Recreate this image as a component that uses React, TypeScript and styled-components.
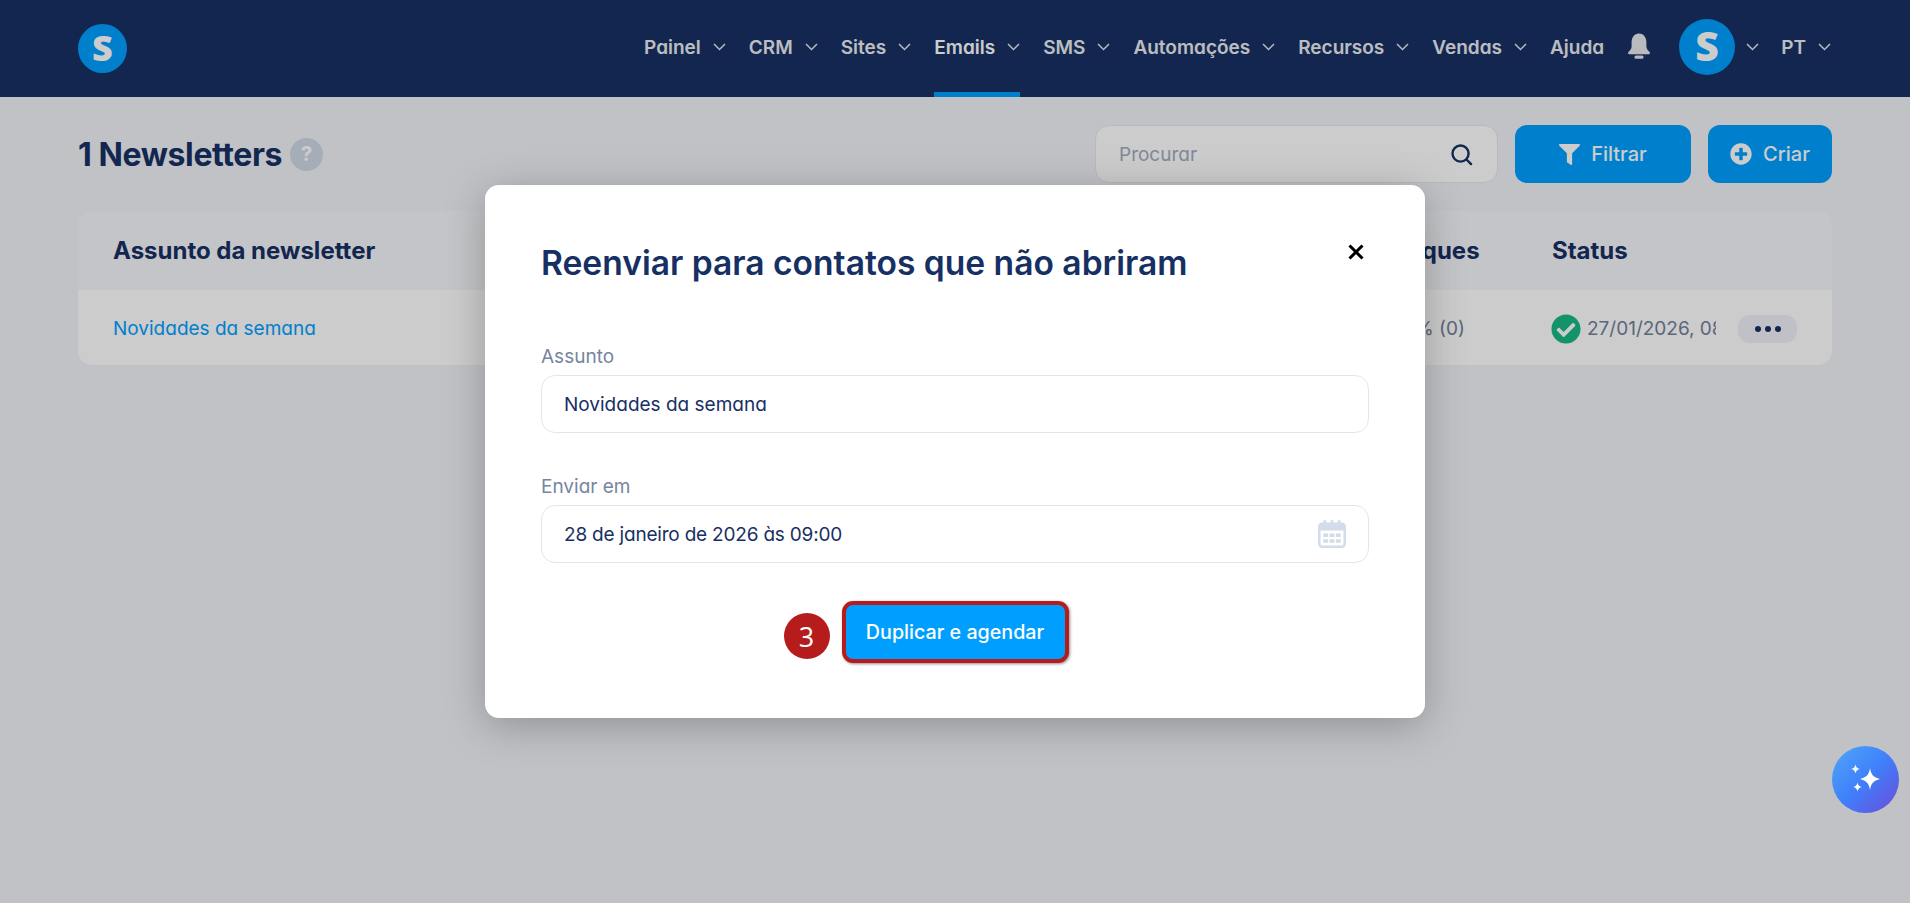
import React from 'react';
import styled, { createGlobalStyle } from 'styled-components';
import { FaCheckCircle, FaFilter, FaPlusCircle } from 'react-icons/fa';

const GlobalStyle = createGlobalStyle`
  html, body {
    margin: 0;
    height: 100%;
    overflow: hidden;
    background: #f1f3f8;
  }
  * {
    box-sizing: border-box;
  }
`;

const geometric = `'Inter', 'Liberation Sans', sans-serif`;

const Page = styled.div`
  position: relative;
  height: 100vh;
  font-family: ${geometric};
  font-feature-settings: 'cv11' 1;
  color: #173063;
`;

const Header = styled.header`
  height: 97px;
  padding: 0 79px 0 78px;
  background: #173063;
  display: flex;
  align-items: center;
  justify-content: space-between;
`;

const LogoCircle = styled.div<{ $size: number; $font: number }>`
  width: ${(p) => p.$size}px;
  height: ${(p) => p.$size}px;
  border-radius: 50%;
  background: #00a0ff;
  color: #fff;
  display: flex;
  align-items: center;
  justify-content: center;
  font-family: 'Open Sans', sans-serif;
  font-weight: 800;
  font-size: ${(p) => p.$font}px;
  line-height: 1;
  font-feature-settings: normal;

  span {
    transform: translateY(-2%);
  }
`;

const Nav = styled.nav`
  height: 100%;
  display: flex;
  align-items: center;
  gap: 23px;
`;

const NavItem = styled.a<{ $active?: boolean }>`
  position: relative;
  height: 100%;
  padding-bottom: 3px;
  display: flex;
  align-items: center;
  gap: 12px;
  font-size: 19px;
  font-weight: 600;
  color: ${(p) => (p.$active ? '#ffffff' : '#eaedf2')};

  &::after {
    content: '';
    display: ${(p) => (p.$active ? 'block' : 'none')};
    position: absolute;
    left: 0;
    right: 0;
    bottom: 0;
    height: 5px;
    background: #00a0ff;
  }
`;

const AvatarGroup = styled.div`
  margin-left: 5px;
  margin-right: -1px;
  display: flex;
  align-items: center;
  gap: 11px;
  padding-bottom: 4px;
`;

const Main = styled.main`
  padding: 28px 78px 0;
`;

const TopBar = styled.div`
  height: 58px;
  display: flex;
  align-items: center;
`;

const PageTitle = styled.h1`
  margin: 0;
  font-size: 32px;
  font-weight: 700;
  letter-spacing: -0.4px;
  font-feature-settings: normal;
`;

const HelpBadge = styled.span`
  width: 33px;
  height: 33px;
  margin-left: 8px;
  border-radius: 50%;
  background: #cfd9e8;
  color: #fff;
  display: flex;
  align-items: center;
  justify-content: center;
  font-size: 20px;
  font-weight: 700;
`;

const Actions = styled.div`
  margin-left: auto;
  display: flex;
  gap: 17px;
`;

const SearchBox = styled.div`
  width: 403px;
  height: 58px;
  padding: 0 24px 0 23px;
  border: 1px solid #e6e8ec;
  border-radius: 14px;
  background: #fff;
  display: flex;
  align-items: center;
  justify-content: space-between;
  font-size: 19px;
  color: #a0adc0;
`;

const PrimaryButton = styled.button<{ $width: number }>`
  width: ${(p) => p.$width}px;
  height: 58px;
  border: 0;
  border-radius: 12px;
  background: #00a0ff;
  color: #fff;
  display: flex;
  align-items: center;
  justify-content: center;
  gap: 11px;
  font-family: 'Inter', sans-serif;
  font-feature-settings: normal;
  font-size: 20px;
  font-weight: 500;
`;

const Table = styled.section`
  margin-top: 28px;
  border-radius: 14px;
  overflow: hidden;
`;

const TableRow = styled.div<{ $head?: boolean }>`
  height: ${(p) => (p.$head ? 79 : 75)}px;
  padding: ${(p) => (p.$head ? '0 35px' : '2px 35px 0')};
  background: ${(p) => (p.$head ? '#f6f7fa' : '#ffffff')};
  display: grid;
  grid-template-columns: 1fr 161px 186px 59px;
  align-items: center;
`;

const HeadCell = styled.div`
  font-size: 24px;
  font-weight: 700;
  font-feature-settings: normal;
`;

const SubjectLink = styled.a`
  font-size: 19px;
  color: #00a0ff;
`;

const CountCell = styled.div`
  padding-left: 12px;
  font-size: 19px;
  color: #71809a;
`;

const StatusCell = styled.div`
  display: flex;
  align-items: center;
  gap: 6px;
  margin-left: -1px;
  color: #71809a;
  font-size: 19px;
`;

const StatusIcon = styled(FaCheckCircle)`
  flex: none;
  width: 30px;
  height: 30px;
  color: #18b884;
`;

const StatusDate = styled.span`
  width: 129px;
  overflow: hidden;
  white-space: nowrap;
`;

const DotsButton = styled.button`
  width: 59px;
  height: 28px;
  border: 0;
  border-radius: 12px;
  background: #f0f2f9;
  display: flex;
  align-items: center;
  justify-content: center;
  gap: 4px;
`;

const Dot = styled.i`
  width: 6px;
  height: 6px;
  border-radius: 50%;
  background: #173063;
`;

const Overlay = styled.div`
  position: absolute;
  inset: 0;
  background: rgba(0, 0, 0, 0.2);
  display: flex;
  justify-content: center;
  align-items: flex-start;
`;

const Modal = styled.div`
  width: 940px;
  margin-top: 185px;
  padding: 58px 56px 59px;
  border-radius: 14px;
  background: #fff;
  box-shadow: 0 8px 40px rgba(0, 0, 0, 0.25);
`;

const ModalHead = styled.div`
  display: flex;
  align-items: flex-start;
  justify-content: space-between;
  margin-bottom: 62px;
`;

const ModalTitle = styled.h2`
  margin: 0;
  font-size: 33.6px;
  line-height: 40px;
  font-weight: 600;
  font-feature-settings: normal;
`;

const CloseButton = styled.button`
  width: 26px;
  height: 26px;
  margin-top: -4px;
  padding: 0;
  border: 0;
  background: none;
  display: flex;
  align-items: center;
  justify-content: center;
`;

const Field = styled.div`
  margin-bottom: 42px;
`;

const FieldLabel = styled.label`
  display: block;
  margin-bottom: 6px;
  font-size: 19px;
  line-height: 24px;
  color: #76859f;
`;

const FieldBox = styled.div`
  height: 58px;
  padding: 0 22px 0 22px;
  border: 1px solid #e3e6ea;
  border-radius: 14px;
  display: flex;
  align-items: center;
  justify-content: space-between;
  font-size: 19px;
`;

const DateValue = styled.span`
  letter-spacing: -0.2px;
`;

const SubmitRow = styled.div`
  display: flex;
  justify-content: center;
  margin-top: 39px;
`;

const SubmitWrap = styled.div`
  position: relative;
`;

const SubmitButton = styled.button`
  display: block;
  width: 219px;
  height: 54px;
  border: 0;
  border-radius: 7px;
  background: #009fff;
  color: #fff;
  font-family: 'Inter', sans-serif;
  font-feature-settings: normal;
  font-size: 19.7px;
  font-weight: 500;
  box-shadow: 0 0 0 4px #b71c1c, 1px 1px 3px 4px rgba(0, 0, 0, 0.45);
`;

const StepBadge = styled.div`
  position: absolute;
  left: -62px;
  top: 8px;
  width: 46px;
  height: 46px;
  border-radius: 50%;
  background: #b71c1c;
  color: #fff;
  display: flex;
  align-items: center;
  justify-content: center;
  font-family: 'Open Sans', sans-serif;
  font-size: 27px;
  font-feature-settings: normal;
`;

const AssistantButton = styled.button`
  position: absolute;
  left: 1832px;
  top: 746px;
  width: 67px;
  height: 67px;
  padding: 0;
  border: 0;
  border-radius: 50%;
  background: linear-gradient(135deg, #4fa8f8 0%, #3f7ffb 50%, #6d4bd6 100%);
  display: flex;
  align-items: center;
  justify-content: center;
`;

const navItems = [
  { label: 'Painel', menu: true },
  { label: 'CRM', menu: true },
  { label: 'Sites', menu: true },
  { label: 'Emails', menu: true, active: true },
  { label: 'SMS', menu: true },
  { label: 'Automações', menu: true },
  { label: 'Recursos', menu: true },
  { label: 'Vendas', menu: true },
  { label: 'Ajuda', menu: false },
];

const Chevron = () => (
  <svg width="13" height="8" viewBox="0 0 13 8" fill="none" stroke="#e4e8ee" strokeWidth="1.5">
    <path d="M1 1l5.500 5.500L12 1" />
  </svg>
);

const BellIcon = () => (
  <svg width="24" height="26" viewBox="0 0 24 26" fill="#e6e9ee" style={{ marginBottom: 5 }}>
    <path d="M12 0.500C7.200 0.500 4.600 4.500 4.600 9.500V13.500c0 2.200-1.500 3.800-3.200 5.500-.8.800-.3 2.300 1 2.300h19.200c1.300 0 1.800-1.500 1-2.300-1.700-1.700-3.200-3.300-3.200-5.500V9.500C19.400 4.500 16.800.5 12 .5z" />
    <rect x="7.500" y="22.500" width="9" height="3.200" rx="1.500" />
  </svg>
);

const CalendarIcon = () => (
  <svg width="28" height="28" viewBox="0 0 29 29" fill="none">
    <rect x="1.300" y="4" width="26.400" height="23.700" rx="3" stroke="#d3dce8" strokeWidth="2.600" />
    <path d="M1 5.500a2.500 2.500 0 0 1 2.500-2.500h22a2.500 2.500 0 0 1 2.500 2.500V11H1z" fill="#d3dce8" />
    <path d="M7 1.500v5M14.500 1.500v5M22 1.500v5" stroke="#d3dce8" strokeWidth="3" strokeLinecap="round" />
    <path
      d="M5.500 14h5v3.500h-5zM12 14h5v3.500h-5zM18.500 14h5v3.500h-5zM5.500 20h5v3.500h-5zM12 20h5v3.500h-5zM18.500 20h5v3.500h-5z"
      fill="#d3dce8"
    />
  </svg>
);

const SearchIcon = () => (
  <svg width="23" height="23" viewBox="0 0 24 24" fill="none" stroke="#173063" strokeWidth="2.500" strokeLinecap="round">
    <circle cx="11" cy="11" r="8.400" />
    <path d="M17.200 17.200L22 22" />
  </svg>
);

const CloseIcon = () => (
  <svg width="16" height="16" viewBox="0 0 16 16" stroke="#000" strokeWidth="3">
    <path d="M1.500 1.500l13 13M14.500 1.500l-13 13" />
  </svg>
);

const SparkleIcon = () => (
  <svg width="40" height="40" viewBox="0 0 40 40" fill="#fff">
    <path d="M24 8c1 6.500 3.500 9.500 10 11-6.500 1.500-9 4.500-10 11-1-6.500-3.500-9.500-10-11 6.500-1.500 9-4.500 10-11z" />
    <path d="M9.500 4.500c.5 2.800 1.600 3.900 4.500 4.500-2.900.6-4 1.700-4.500 4.500-.5-2.800-1.600-3.900-4.500-4.500 2.900-.6 4-1.700 4.500-4.500z" />
    <path d="M11.500 22.500c.5 2.800 1.600 3.900 4.500 4.500-2.900.6-4 1.700-4.500 4.500-.5-2.800-1.600-3.900-4.500-4.500 2.900-.6 4-1.700 4.500-4.500z" />
  </svg>
);

export default function App() {
  return (
    <Page>
      <GlobalStyle />
      <Header>
        <LogoCircle $size={49} $font={36}>
          <span>S</span>
        </LogoCircle>
        <Nav>
          {navItems.map((item) => (
            <NavItem key={item.label} $active={item.active}>
              {item.label}
              {item.menu && <Chevron />}
            </NavItem>
          ))}
          <BellIcon />
          <AvatarGroup>
            <LogoCircle $size={56} $font={41}>
              <span>S</span>
            </LogoCircle>
            <Chevron />
          </AvatarGroup>
          <NavItem>
            PT
            <Chevron />
          </NavItem>
        </Nav>
      </Header>

      <Main>
        <TopBar>
          <PageTitle>1 Newsletters</PageTitle>
          <HelpBadge>?</HelpBadge>
          <Actions>
            <SearchBox>
              Procurar
              <SearchIcon />
            </SearchBox>
            <PrimaryButton $width={176}>
              <FaFilter size={21} />
              Filtrar
            </PrimaryButton>
            <PrimaryButton $width={124}>
              <FaPlusCircle size={22} />
              Criar
            </PrimaryButton>
          </Actions>
        </TopBar>

        <Table>
          <TableRow $head>
            <HeadCell>Assunto da newsletter</HeadCell>
            <HeadCell>Cliques</HeadCell>
            <HeadCell>Status</HeadCell>
            <span />
          </TableRow>
          <TableRow>
            <SubjectLink>Novidades da semana</SubjectLink>
            <CountCell>0% (0)</CountCell>
            <StatusCell>
              <StatusIcon />
              <StatusDate>27/01/2026, 08:00</StatusDate>
            </StatusCell>
            <DotsButton>
              <Dot />
              <Dot />
              <Dot />
            </DotsButton>
          </TableRow>
        </Table>
      </Main>

      <Overlay>
        <Modal>
          <ModalHead>
            <ModalTitle>Reenviar para contatos que não abriram</ModalTitle>
            <CloseButton>
              <CloseIcon />
            </CloseButton>
          </ModalHead>
          <Field>
            <FieldLabel>Assunto</FieldLabel>
            <FieldBox>Novidades da semana</FieldBox>
          </Field>
          <Field>
            <FieldLabel>Enviar em</FieldLabel>
            <FieldBox>
              <DateValue>28 de janeiro de 2026 às 09:00</DateValue>
              <CalendarIcon />
            </FieldBox>
          </Field>
          <SubmitRow>
            <SubmitWrap>
              <StepBadge>3</StepBadge>
              <SubmitButton>Duplicar e agendar</SubmitButton>
            </SubmitWrap>
          </SubmitRow>
        </Modal>
      </Overlay>

      <AssistantButton>
        <SparkleIcon />
      </AssistantButton>
    </Page>
  );
}
